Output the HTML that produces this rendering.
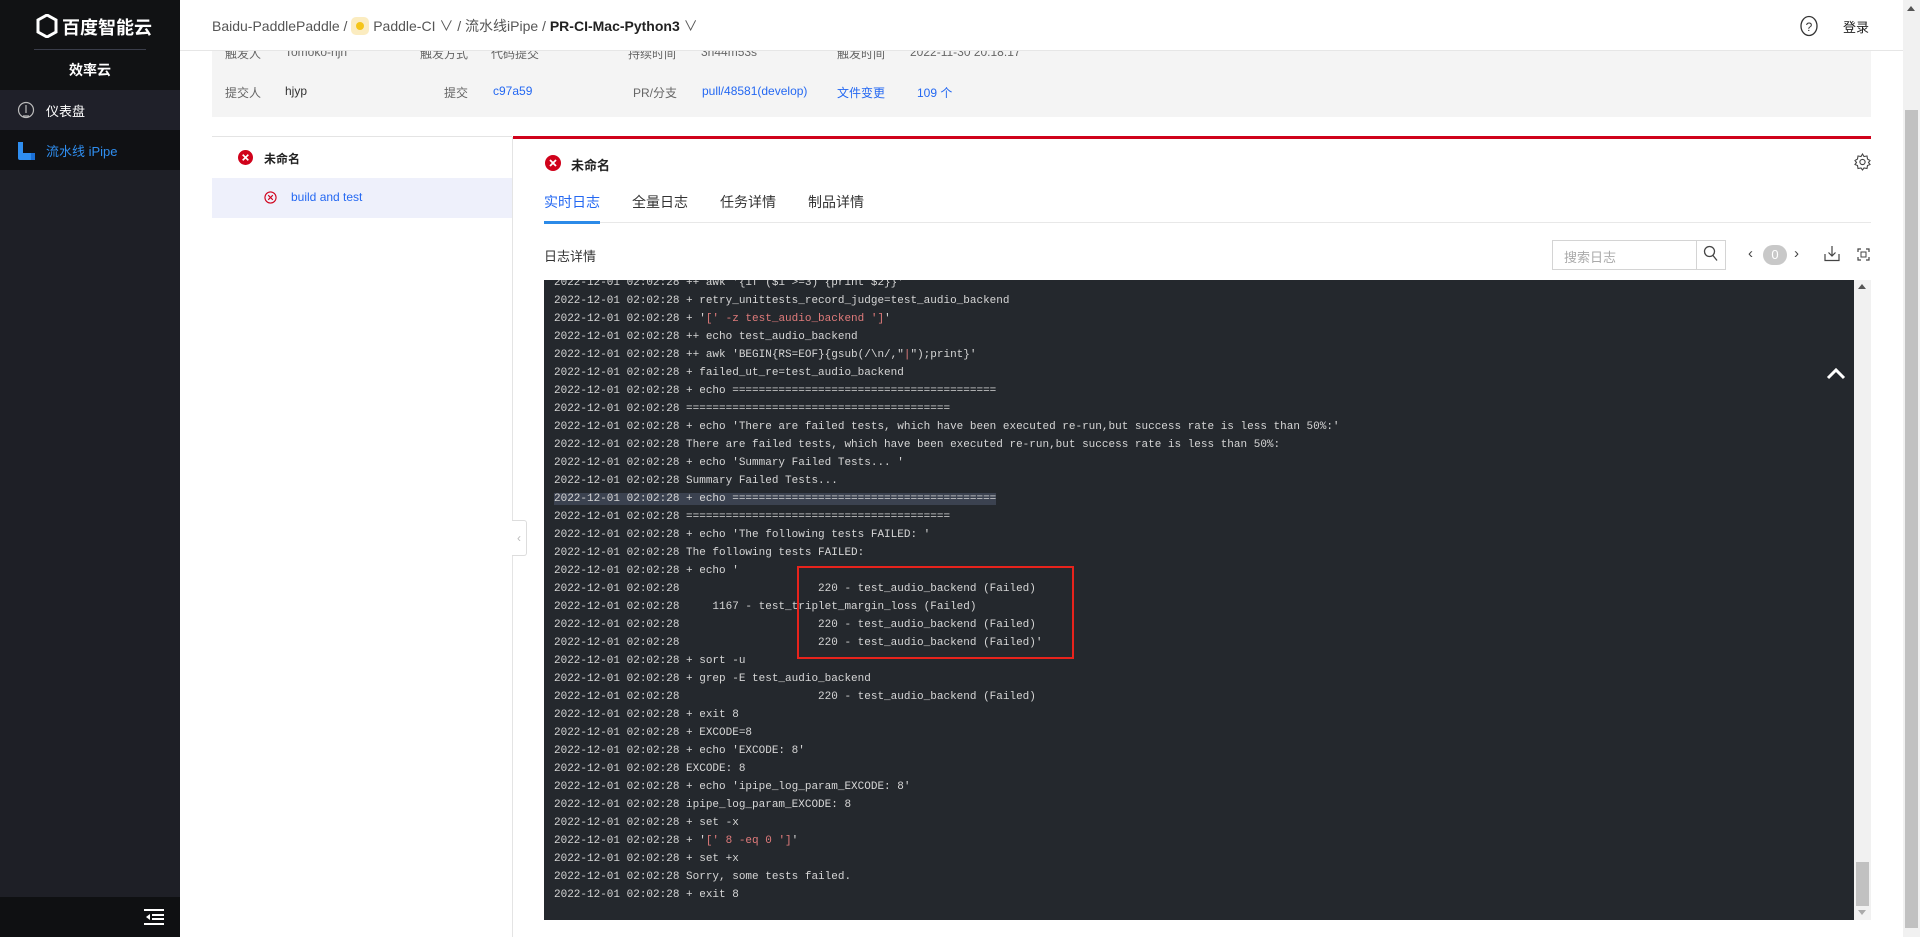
<!DOCTYPE html>
<html><head><meta charset="utf-8">
<style>
*{margin:0;padding:0;box-sizing:border-box}
body{width:1920px;height:937px;overflow:hidden;background:#fff;font-family:"Liberation Sans","Noto Sans CJK SC",sans-serif;position:relative;color:#333}
.abs{position:absolute}
.side{left:0;top:0;width:180px;height:937px;background:#1e1f26}
.log{left:544px;top:280px;width:1310px;height:640px;background:#24282d;overflow:hidden}
.lines{position:absolute;left:10px;top:-6px;font-family:"Liberation Mono","DejaVu Sans Mono",monospace;font-size:11px;line-height:18px;color:#d6d6d6;white-space:pre}
.r{color:#e07b7b}
.hl{background:#3b4250}
.lbl{font-size:12px;color:#666;position:absolute}
.lnk{font-size:12px;color:#2468f2;position:absolute}
</style></head><body>
<div class="abs side"></div>
<div class="abs" style="left:0;top:0;width:180px;height:90px;background:#111214"></div>
<div class="abs" style="left:0;top:90px;width:180px;height:40px;background:#1f2029"></div>
<div class="abs" style="left:0;top:130px;width:180px;height:40px;background:#101114"></div>
<div class="abs" style="left:0;top:897px;width:180px;height:40px;background:#0f1012"></div>
<svg class="abs" style="left:36px;top:14px" width="22" height="24" viewBox="0 0 22 24"><path d="M11 1L20 6V18L11 23L2 18V6Z" fill="none" stroke="#fff" stroke-width="3"/><path d="M11 9L15 11V15L11 17L7 15V11Z" fill="#111214"/></svg>
<div class="abs" style="left:62px;top:14px;color:#fff;font-size:18px;font-weight:bold">百度智能云</div>
<div class="abs" style="left:34px;top:49px;width:112px;height:1px;background:#3a3d4a"></div>
<div class="abs" style="left:0;top:60px;width:180px;text-align:center;color:#fff;font-size:14px;font-weight:bold">效率云</div>
<svg class="abs" style="left:17px;top:101px" width="18" height="18" viewBox="0 0 18 18"><circle cx="9" cy="9" r="7.5" fill="none" stroke="#bbb" stroke-width="1.2"/><path d="M9 4V12M6 15H12" stroke="#bbb" stroke-width="1.2"/></svg>
<div class="abs" style="left:46px;top:101px;color:#fff;font-size:13px">仪表盘</div>
<svg class="abs" style="left:17px;top:141px" width="20" height="20" viewBox="0 0 20 20"><path d="M1 1H6V12H14V19H3Q1 19 1 17Z" fill="#2f8ef0"/><rect x="14" y="12" width="4" height="7" fill="#1a6fd6"/></svg>
<div class="abs" style="left:46px;top:141px;color:#2f8ef0;font-size:13px">流水线 iPipe</div>
<svg class="abs" style="left:144px;top:909px" width="20" height="16" viewBox="0 0 20 16"><path d="M0 1H20M8 6H20M8 10H20M0 15H20" stroke="#fff" stroke-width="2"/><path d="M6 5L2 8L6 11Z" fill="#fff"/></svg>

<div class="abs" style="left:180px;top:0;width:1723px;height:51px;background:#fff;border-bottom:1px solid #e6e6e6;z-index:3"></div>
<div class="abs" style="left:212px;top:16px;font-size:14px;color:#555;z-index:4;white-space:nowrap">Baidu-PaddlePaddle / <span style="display:inline-block;width:18px;height:18px;border-radius:5px;background:#fbecc0;vertical-align:-4px;position:relative"><span style="position:absolute;left:5px;top:5px;width:8px;height:8px;border-radius:50%;background:#f5c518"></span></span> Paddle-CI ∨ / 流水线iPipe / <b style="color:#222">PR-CI-Mac-Python3</b> ∨</div>
<svg class="abs" style="left:1799px;top:15px;z-index:4" width="20" height="22" viewBox="0 0 20 22"><ellipse cx="10" cy="11" rx="8" ry="9.5" fill="none" stroke="#333" stroke-width="1.3"/><text x="10" y="16" font-size="12" text-anchor="middle" fill="#333" font-family="Liberation Sans">?</text></svg>
<div class="abs" style="left:1843px;top:17px;font-size:13px;color:#222;z-index:4">登录</div>

<div class="abs" style="left:212px;top:40px;width:1659px;height:77px;background:#f4f4f4"></div>
<div class="lbl" style="left:225px;top:45px">触发人</div><div class="lbl" style="left:285px;top:45px">Tomoko-hjn</div>
<div class="lbl" style="left:420px;top:45px">触发方式</div><div class="lbl" style="left:491px;top:45px">代码提交</div>
<div class="lbl" style="left:628px;top:45px">持续时间</div><div class="lbl" style="left:701px;top:45px">3h44m53s</div>
<div class="lbl" style="left:837px;top:45px">触发时间</div><div class="lbl" style="left:910px;top:45px">2022-11-30 20:18:17</div>
<div class="lbl" style="left:225px;top:84px">提交人</div><div class="lbl" style="left:285px;top:84px;color:#333">hjyp</div>
<div class="lbl" style="left:444px;top:84px">提交</div><div class="lnk" style="left:493px;top:84px">c97a59</div>
<div class="lbl" style="left:633px;top:84px">PR/分支</div><div class="lnk" style="left:702px;top:84px">pull/48581(develop)</div>
<div class="lnk" style="left:837px;top:84px">文件变更</div><div class="lnk" style="left:917px;top:84px">109 个</div>

<div class="abs" style="left:212px;top:136px;width:300px;height:1px;background:#e4e4e4"></div>
<div class="abs" style="left:512px;top:137px;width:1px;height:800px;background:#e4e4e4"></div>
<svg class="abs" style="left:238px;top:150px" width="15" height="15" viewBox="0 0 16 16"><circle cx="8" cy="8" r="8" fill="#d0021b"/><path d="M5 5L11 11M11 5L5 11" stroke="#fff" stroke-width="1.8"/></svg>
<div class="abs" style="left:264px;top:150px;font-size:12px;font-weight:bold;color:#222">未命名</div>
<div class="abs" style="left:212px;top:178px;width:300px;height:40px;background:#eef0fb"></div>
<svg class="abs" style="left:264px;top:191px" width="13" height="13" viewBox="0 0 14 14"><circle cx="7" cy="7" r="6" fill="none" stroke="#d0021b" stroke-width="1.2"/><path d="M4.5 4.5L9.5 9.5M9.5 4.5L4.5 9.5" stroke="#d0021b" stroke-width="1.2"/></svg>
<div class="abs" style="left:291px;top:190px;font-size:12px;color:#2468f2">build and test</div>
<div class="abs" style="left:512px;top:520px;width:15px;height:36px;border:1px solid #ddd;border-left:none;border-radius:0 3px 3px 0;background:#fff;color:#bbb;font-size:12px;line-height:34px;text-align:center">‹</div>

<div class="abs" style="left:513px;top:136px;width:1358px;height:3px;background:#d0021b"></div>
<svg class="abs" style="left:545px;top:155px" width="16" height="16" viewBox="0 0 16 16"><circle cx="8" cy="8" r="8" fill="#d0021b"/><path d="M5 5L11 11M11 5L5 11" stroke="#fff" stroke-width="1.8"/></svg>
<div class="abs" style="left:571px;top:155px;font-size:13px;font-weight:bold;color:#222">未命名</div>
<svg class="abs" style="left:1854px;top:153px" width="17" height="18" viewBox="0 0 17 18"><path d="M8.5 1L10 3.5L13 3L13.5 6L16 7.5L14.5 9.5L16 11.5L13.5 12.5L13 15.5L10 15L8.5 17L7 15L4 15.5L3.5 12.5L1 11.5L2.5 9.5L1 7.5L3.5 6L4 3L7 3.5Z" fill="none" stroke="#444" stroke-width="1.1"/><circle cx="8.5" cy="9" r="2.6" fill="none" stroke="#444" stroke-width="1.1"/></svg>
<div class="abs" style="left:544px;top:192px;font-size:14px;color:#2468f2">实时日志</div>
<div class="abs" style="left:632px;top:192px;font-size:14px;color:#333">全量日志</div>
<div class="abs" style="left:720px;top:192px;font-size:14px;color:#333">任务详情</div>
<div class="abs" style="left:808px;top:192px;font-size:14px;color:#333">制品详情</div>
<div class="abs" style="left:544px;top:222px;width:1327px;height:1px;background:#e8e8e8"></div>
<div class="abs" style="left:544px;top:221px;width:56px;height:3px;background:#2b8ae8"></div>
<div class="abs" style="left:544px;top:246px;font-size:13px;color:#333">日志详情</div>
<div class="abs" style="left:1552px;top:240px;width:174px;height:30px;border:1px solid #d4d4d4;background:#fff"></div>
<div class="abs" style="left:1696px;top:240px;width:1px;height:30px;background:#d4d4d4"></div>
<div class="abs" style="left:1564px;top:247px;font-size:13px;color:#aaa">搜索日志</div>
<svg class="abs" style="left:1703px;top:245px" width="16" height="18" viewBox="0 0 16 18"><circle cx="6.5" cy="6.5" r="5" fill="none" stroke="#444" stroke-width="1.3"/><path d="M10 10.5L14 15.5" stroke="#444" stroke-width="1.3"/></svg>
<div class="abs" style="left:1748px;top:245px;font-size:15px;color:#444">‹</div>
<div class="abs" style="left:1763px;top:245px;width:24px;height:20px;border-radius:10px;background:#c8c8c8;color:#fff;font-size:13px;text-align:center;line-height:20px">0</div>
<div class="abs" style="left:1794px;top:245px;font-size:15px;color:#444">›</div>
<svg class="abs" style="left:1824px;top:245px" width="16" height="17" viewBox="0 0 16 17"><path d="M8 1V11M4.5 7.5L8 11L11.5 7.5M1 9V15.5H15V9" fill="none" stroke="#444" stroke-width="1.2"/></svg>
<svg class="abs" style="left:1857px;top:248px" width="13" height="13" viewBox="0 0 13 13"><path d="M1 4V1H4M9 1H12V4M12 9V12H9M4 12H1V9" fill="none" stroke="#444" stroke-width="1.2"/><rect x="4" y="4" width="5" height="5" fill="none" stroke="#444" stroke-width="1"/></svg>

<div class="abs log"><div class="lines">2022-12-01 02:02:28 ++ awk '{if ($1 >=3) {print $2}}'
2022-12-01 02:02:28 + retry_unittests_record_judge=test_audio_backend
2022-12-01 02:02:28 + '<span class="r">[' -z test_audio_backend ']</span>'
2022-12-01 02:02:28 ++ echo test_audio_backend
2022-12-01 02:02:28 ++ awk 'BEGIN{RS=EOF}{gsub(/\n/,"<span class="r">|</span>");print}'
2022-12-01 02:02:28 + failed_ut_re=test_audio_backend
2022-12-01 02:02:28 + echo ========================================
2022-12-01 02:02:28 ========================================
2022-12-01 02:02:28 + echo 'There are failed tests, which have been executed re-run,but success rate is less than 50%:'
2022-12-01 02:02:28 There are failed tests, which have been executed re-run,but success rate is less than 50%:
2022-12-01 02:02:28 + echo 'Summary Failed Tests... '
2022-12-01 02:02:28 Summary Failed Tests...
<span class="hl">2022-12-01 02:02:28 + echo ========================================</span>
2022-12-01 02:02:28 ========================================
2022-12-01 02:02:28 + echo 'The following tests FAILED: '
2022-12-01 02:02:28 The following tests FAILED:
2022-12-01 02:02:28 + echo '
2022-12-01 02:02:28                     220 - test_audio_backend (Failed)
2022-12-01 02:02:28     1167 - test_triplet_margin_loss (Failed)
2022-12-01 02:02:28                     220 - test_audio_backend (Failed)
2022-12-01 02:02:28                     220 - test_audio_backend (Failed)'
2022-12-01 02:02:28 + sort -u
2022-12-01 02:02:28 + grep -E test_audio_backend
2022-12-01 02:02:28                     220 - test_audio_backend (Failed)
2022-12-01 02:02:28 + exit 8
2022-12-01 02:02:28 + EXCODE=8
2022-12-01 02:02:28 + echo 'EXCODE: 8'
2022-12-01 02:02:28 EXCODE: 8
2022-12-01 02:02:28 + echo 'ipipe_log_param_EXCODE: 8'
2022-12-01 02:02:28 ipipe_log_param_EXCODE: 8
2022-12-01 02:02:28 + set -x
2022-12-01 02:02:28 + '<span class="r">[' 8 -eq 0 ']</span>'
2022-12-01 02:02:28 + set +x
2022-12-01 02:02:28 Sorry, some tests failed.
2022-12-01 02:02:28 + exit 8</div>
<svg style="position:absolute;left:1282px;top:86px" width="20" height="14" viewBox="0 0 20 14"><path d="M2 12L10 4L18 12" fill="none" stroke="#fff" stroke-width="3"/></svg>
</div>
<div class="abs" style="left:797px;top:566px;width:277px;height:93px;border:2px solid #e8231c"></div>
<div class="abs" style="left:1854px;top:280px;width:17px;height:640px;background:#f1f1f1"></div>
<div class="abs" style="left:1858px;top:284px;width:0;height:0;border-left:4px solid transparent;border-right:4px solid transparent;border-bottom:5px solid #555"></div>
<div class="abs" style="left:1856px;top:862px;width:13px;height:44px;background:#c1c1c1"></div>
<div class="abs" style="left:1858px;top:910px;width:0;height:0;border-left:4px solid transparent;border-right:4px solid transparent;border-top:5px solid #aaa"></div>

<div class="abs" style="left:1903px;top:0;width:17px;height:937px;background:#f1f1f1;z-index:5"></div>
<div class="abs" style="left:1905px;top:110px;width:13px;height:818px;background:#c1c1c1;z-index:6"></div>
<div class="abs" style="left:1907px;top:6px;width:0;height:0;border-left:4px solid transparent;border-right:4px solid transparent;border-bottom:5px solid #555;z-index:6"></div>
</body></html>
